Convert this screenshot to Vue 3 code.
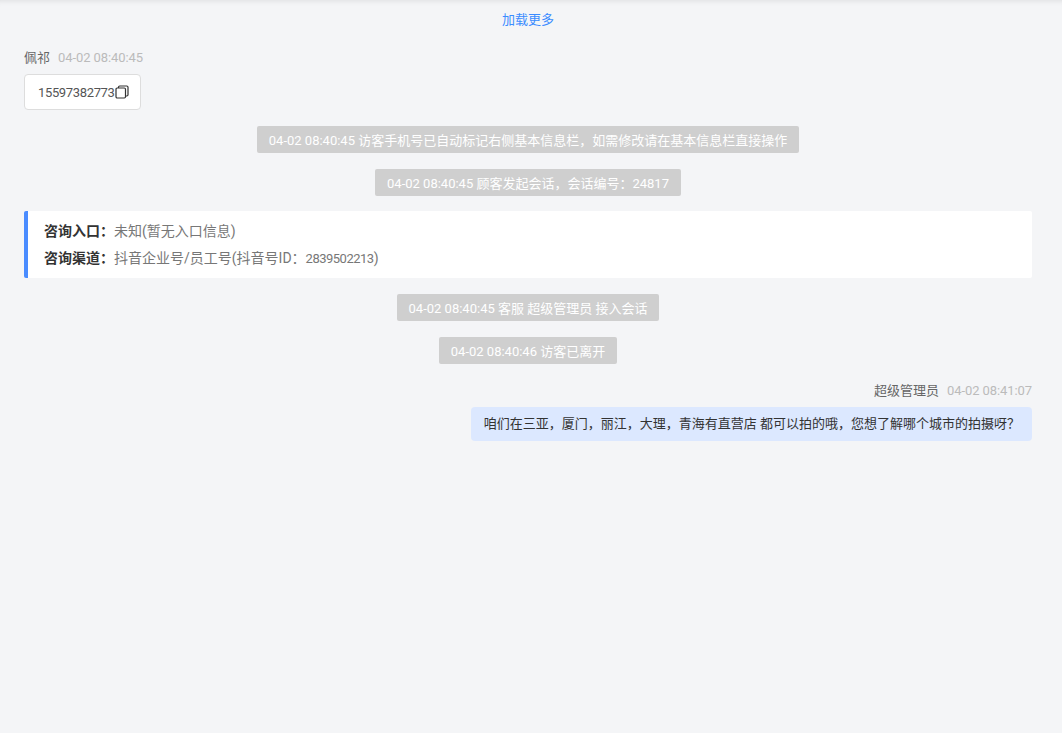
<script setup>
const items = [
  { type: 'system', text: '04-02 08:40:45 访客手机号已自动标记右侧基本信息栏，如需修改请在基本信息栏直接操作' },
  { type: 'system', text: '04-02 08:40:45 顾客发起会话，会话编号：24817' },
  { type: 'notice' },
  { type: 'system', text: '04-02 08:40:45 客服 超级管理员 接入会话' },
  { type: 'system', text: '04-02 08:40:46 访客已离开' },
]
</script>

<template>
  <div class="chat">
    <div class="load-more">加载更多</div>

    <div class="msg">
      <div class="meta"><span class="name">佩祁</span><span class="time">04-02 08:40:45</span></div>
      <div class="phone">
        <span class="phone-num">15597382773</span>
        <svg class="copy" width="14" height="14" viewBox="0 0 14 14" fill="none" stroke="#333" stroke-width="1.2">
          <rect x="1" y="3" width="9.5" height="10" rx="1.2" />
          <path d="M3.5 3V2.200A1.200 1.200 0 0 1 4.700 1h7.100A1.200 1.200 0 0 1 13 2.200V9.800A1.200 1.200 0 0 1 11.800 11H10.500" />
        </svg>
      </div>
    </div>

    <template v-for="(item, i) in items" :key="i">
      <div v-if="item.type === 'system'" class="system-row">
        <div class="system">{{ item.text }}</div>
      </div>
      <div v-else class="notice">
        <div class="notice-line"><b>咨询入口：</b><span>未知(暂无入口信息)</span></div>
        <div class="notice-line"><b>咨询渠道：</b><span>抖音企业号/员工号(抖音号ID：<span class="num">2839502213</span>)</span></div>
      </div>
    </template>

    <div class="msg mine">
      <div class="meta"><span class="name">超级管理员</span><span class="time">04-02 08:41:07</span></div>
      <div class="bubble">咱们在三亚，厦门，丽江，大理，青海有直营店 都可以拍的哦，您想了解哪个城市的拍摄呀？</div>
    </div>
  </div>
</template>

<style>
html, body {
  background: #f4f5f7;
}
</style>

<style scoped>
.chat {
  min-height: 733px;
  box-sizing: border-box;
  padding: 0 30px 0 24px;
  background: #f4f5f7;
  box-shadow: inset 0 6px 6px -6px rgba(0, 0, 0, 0.12);
  font-family: Roboto, "Noto Sans CJK SC", sans-serif;
  font-size: 13px;
  color: #555;
}

.load-more {
  height: 40px;
  line-height: 39px;
  text-align: center;
  color: #3b8cff;
}

.msg {
  display: flex;
  flex-direction: column;
  align-items: flex-start;
  margin-bottom: 16px;
}

.meta {
  display: flex;
  gap: 8px;
  height: 34px;
  line-height: 36px;
}

.msg.mine {
  align-items: flex-end;
}

.mine .meta {
  height: 27px;
  line-height: 22px;
}

.name {
  color: #666;
}

.time {
  color: #bbb;
  letter-spacing: -0.08px;
}

.phone {
  display: flex;
  align-items: center;
  box-sizing: border-box;
  height: 36px;
  width: 117px;
  padding: 0 12px 0 13px;
  background: #fff;
  border: 1px solid #ddd;
  border-radius: 4px;
  color: #555;
  white-space: nowrap;
}

.phone-num {
  letter-spacing: -0.35px;
}

.copy {
  flex: none;
}

.system-row {
  display: flex;
  justify-content: center;
  margin-bottom: 16px;
}

.system {
  height: 27px;
  line-height: 29px;
  padding: 0 12px;
  background: #cfcfcf;
  border-radius: 2px;
  color: #fff;
  white-space: nowrap;
}

.notice {
  box-sizing: border-box;
  height: 67px;
  margin: -1px 0 16px;
  padding: 7px 16px 0;
  background: #fff;
  border-left: 4px solid #4a8cff;
  border-radius: 2px;
  font-size: 14px;
}

.notice-line {
  height: 27px;
  line-height: 27px;
  color: #777;
}

.notice-line b {
  color: #333;
  font-weight: 700;
  display: inline-block;
  width: 70px;
}

.num {
  font-size: 13px;
  letter-spacing: -0.5px;
}

.bubble {
  height: 34px;
  line-height: 34px;
  padding: 0 12px 0 13px;
  background: #dce8ff;
  border-radius: 4px;
  color: #333;
  white-space: nowrap;
}
</style>
